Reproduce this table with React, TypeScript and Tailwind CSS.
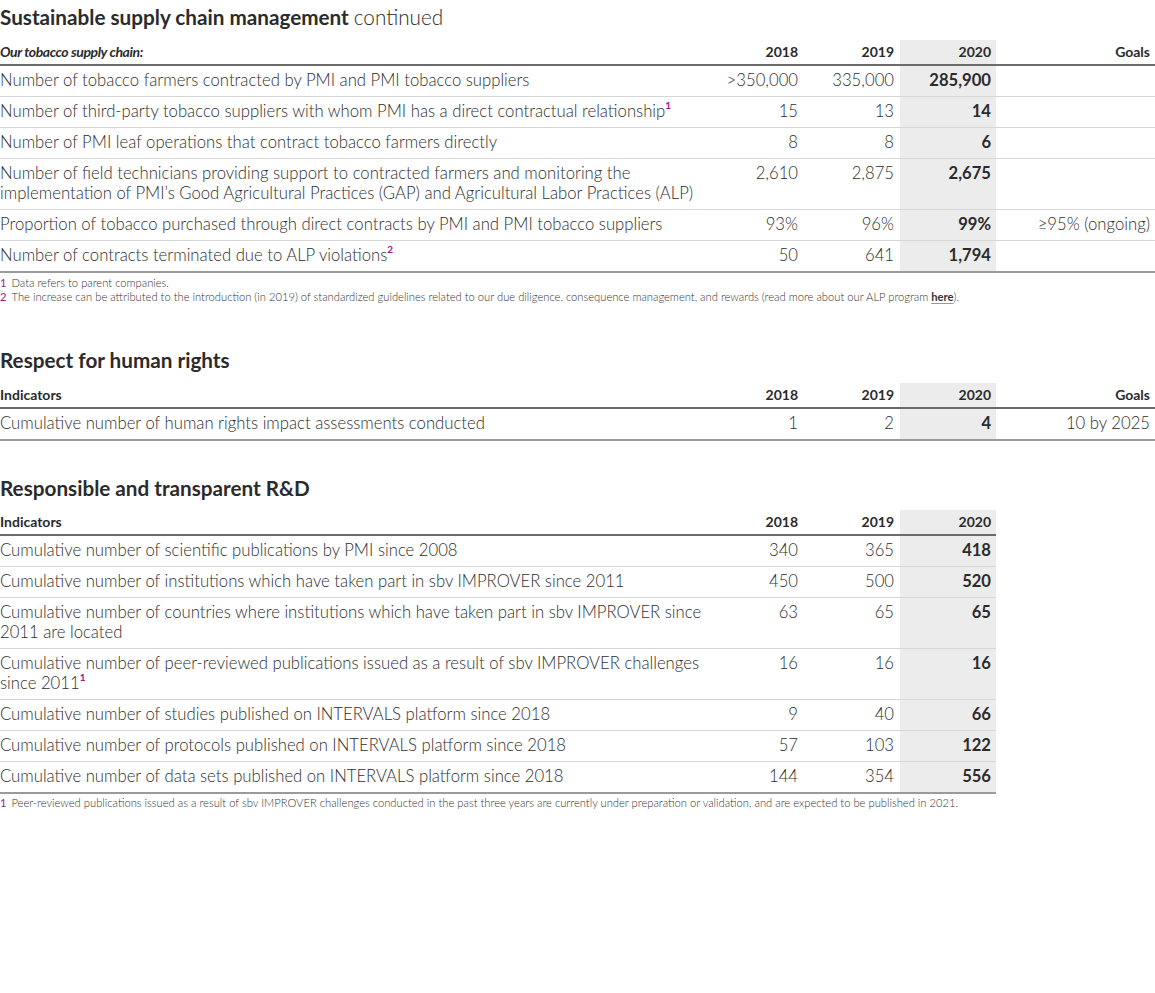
import React from 'react';

type Row = {
  label: React.ReactNode;
  v18: string;
  v19: string;
  v20: string;
  goal?: string;
};

const Sup = ({ n }: { n: string }) => (
  <sup className="relative -top-[1px] text-[10px] font-bold text-[#a3167f] align-super">{n}</sup>
);

const supplyRows: Row[] = [
  { label: 'Number of tobacco farmers contracted by PMI and PMI tobacco suppliers', v18: '>350,000', v19: '335,000', v20: '285,900' },
  {
    label: (
      <>
        Number of third-party tobacco suppliers with whom PMI has a direct contractual relationship
        <Sup n="1" />
      </>
    ),
    v18: '15',
    v19: '13',
    v20: '14',
  },
  { label: 'Number of PMI leaf operations that contract tobacco farmers directly', v18: '8', v19: '8', v20: '6' },
  {
    label: (
      <>
        Number of field technicians providing support to contracted farmers and monitoring the
        <br />
        implementation of PMI’s Good Agricultural Practices (GAP) and Agricultural Labor Practices (ALP)
      </>
    ),
    v18: '2,610',
    v19: '2,875',
    v20: '2,675',
  },
  {
    label: 'Proportion of tobacco purchased through direct contracts by PMI and PMI tobacco suppliers',
    v18: '93%',
    v19: '96%',
    v20: '99%',
    goal: '≥95% (ongoing)',
  },
  {
    label: (
      <>
        Number of contracts terminated due to ALP violations
        <Sup n="2" />
      </>
    ),
    v18: '50',
    v19: '641',
    v20: '1,794',
  },
];

const rightsRows: Row[] = [
  { label: 'Cumulative number of human rights impact assessments conducted', v18: '1', v19: '2', v20: '4', goal: '10 by 2025' },
];

const rdRows: Row[] = [
  { label: 'Cumulative number of scientific publications by PMI since 2008', v18: '340', v19: '365', v20: '418' },
  { label: 'Cumulative number of institutions which have taken part in sbv IMPROVER since 2011', v18: '450', v19: '500', v20: '520' },
  {
    label: (
      <>
        Cumulative number of countries where institutions which have taken part in sbv IMPROVER since
        <br />
        2011 are located
      </>
    ),
    v18: '63',
    v19: '65',
    v20: '65',
  },
  {
    label: (
      <>
        Cumulative number of peer-reviewed publications issued as a result of sbv IMPROVER challenges
        <br />
        since 2011
        <Sup n="1" />
      </>
    ),
    v18: '16',
    v19: '16',
    v20: '16',
  },
  { label: 'Cumulative number of studies published on INTERVALS platform since 2018', v18: '9', v19: '40', v20: '66' },
  { label: 'Cumulative number of protocols published on INTERVALS platform since 2018', v18: '57', v19: '103', v20: '122' },
  { label: 'Cumulative number of data sets published on INTERVALS platform since 2018', v18: '144', v19: '354', v20: '556' },
];

function DataTable({
  heading,
  headingItalic,
  rows,
  withGoals,
}: {
  heading: string;
  headingItalic?: boolean;
  rows: Row[];
  withGoals: boolean;
}) {
  const cols = withGoals ? 'grid-cols-[706px_97px_97px_96px_159px]' : 'grid-cols-[706px_97px_97px_96px]';
  return (
    <div className={withGoals ? 'w-[1155px]' : 'w-[996px]'}>
      {/* header */}
      <div className={`grid ${cols} h-[26px] items-end border-b-2 border-[#6b6b6b] text-[14px] font-bold text-[#2b2b2b]`}>
        <div className={`pb-[2px] ${headingItalic ? 'italic tracking-[-0.4px]' : ''}`}>{heading}</div>
        <div className="pb-[2px] pr-[5px] text-right">2018</div>
        <div className="pb-[2px] pr-[6px] text-right">2019</div>
        <div className="h-full bg-[#ececec] pb-[2px] pr-[5px] text-right flex items-end justify-end">2020</div>
        {withGoals && <div className="pb-[2px] pr-[5px] text-right">Goals</div>}
      </div>
      {rows.map((r, i) => (
        <div
          key={i}
          className={`grid ${cols} text-[16.7px] font-light leading-[20px] text-[#2e2e2e] ${
            i === rows.length - 1 ? 'border-b-2 border-[#9a9a9a]' : 'border-b border-[#d6d6d6]'
          }`}
        >
          <div className="pt-[4px] pb-[6px] pr-[2px] whitespace-nowrap">{r.label}</div>
          <div className="pt-[4px] pr-[5px] text-right">{r.v18}</div>
          <div className="pt-[4px] pr-[6px] text-right">{r.v19}</div>
          <div className="bg-[#ececec] pt-[4px] pr-[5px] text-right text-[16.6px] font-bold text-[#2b2b2b]">{r.v20}</div>
          {withGoals && <div className="pt-[4px] pr-[5px] text-right">{r.goal ?? ''}</div>}
        </div>
      ))}
    </div>
  );
}

const Note = ({ n, children }: { n: string; children: React.ReactNode }) => (
  <div className="flex gap-[5px] text-[11.2px] leading-[14px] text-[#333] font-light">
    <span className="text-[#a3167f] font-normal">{n}</span>
    <span>{children}</span>
  </div>
);

export default function App() {
  return (
    <div className="min-h-[993px] w-[1155px] bg-white font-['Lato','Liberation_Sans',sans-serif]">
      <h1 className="pt-[3px] text-[20.7px] leading-[28px] font-bold text-[#2b2b2b]">
        Sustainable supply chain management <span className="font-light">continued</span>
      </h1>
      <div className="mt-[9px]">
        <DataTable heading="Our tobacco supply chain:" headingItalic rows={supplyRows} withGoals />
      </div>
      <div className="mt-[3px] flex flex-col">
        <Note n="1">Data refers to parent companies.</Note>
        <Note n="2">
          The increase can be attributed to the introduction (in 2019) of standardized guidelines related to our due diligence,
          consequence management, and rewards (read more about our ALP program{' '}
          <span className="font-bold underline decoration-[#999] underline-offset-2">here</span>).
        </Note>
      </div>

      <h2 className="mt-[42px] text-[20.7px] leading-[28px] font-bold text-[#2b2b2b]">Respect for human rights</h2>
      <div className="mt-[9px]">
        <DataTable heading="Indicators" rows={rightsRows} withGoals />
      </div>

      <h2 className="mt-[33px] text-[20.7px] leading-[28px] font-bold text-[#2b2b2b]">Responsible and transparent R&amp;D</h2>
      <div className="mt-[8px]">
        <DataTable heading="Indicators" rows={rdRows} withGoals={false} />
      </div>
      <div className="mt-[2px]">
        <Note n="1">
          Peer-reviewed publications issued as a result of sbv IMPROVER challenges conducted in the past three years are currently
          under preparation or validation, and are expected to be published in 2021.
        </Note>
      </div>
    </div>
  );
}
